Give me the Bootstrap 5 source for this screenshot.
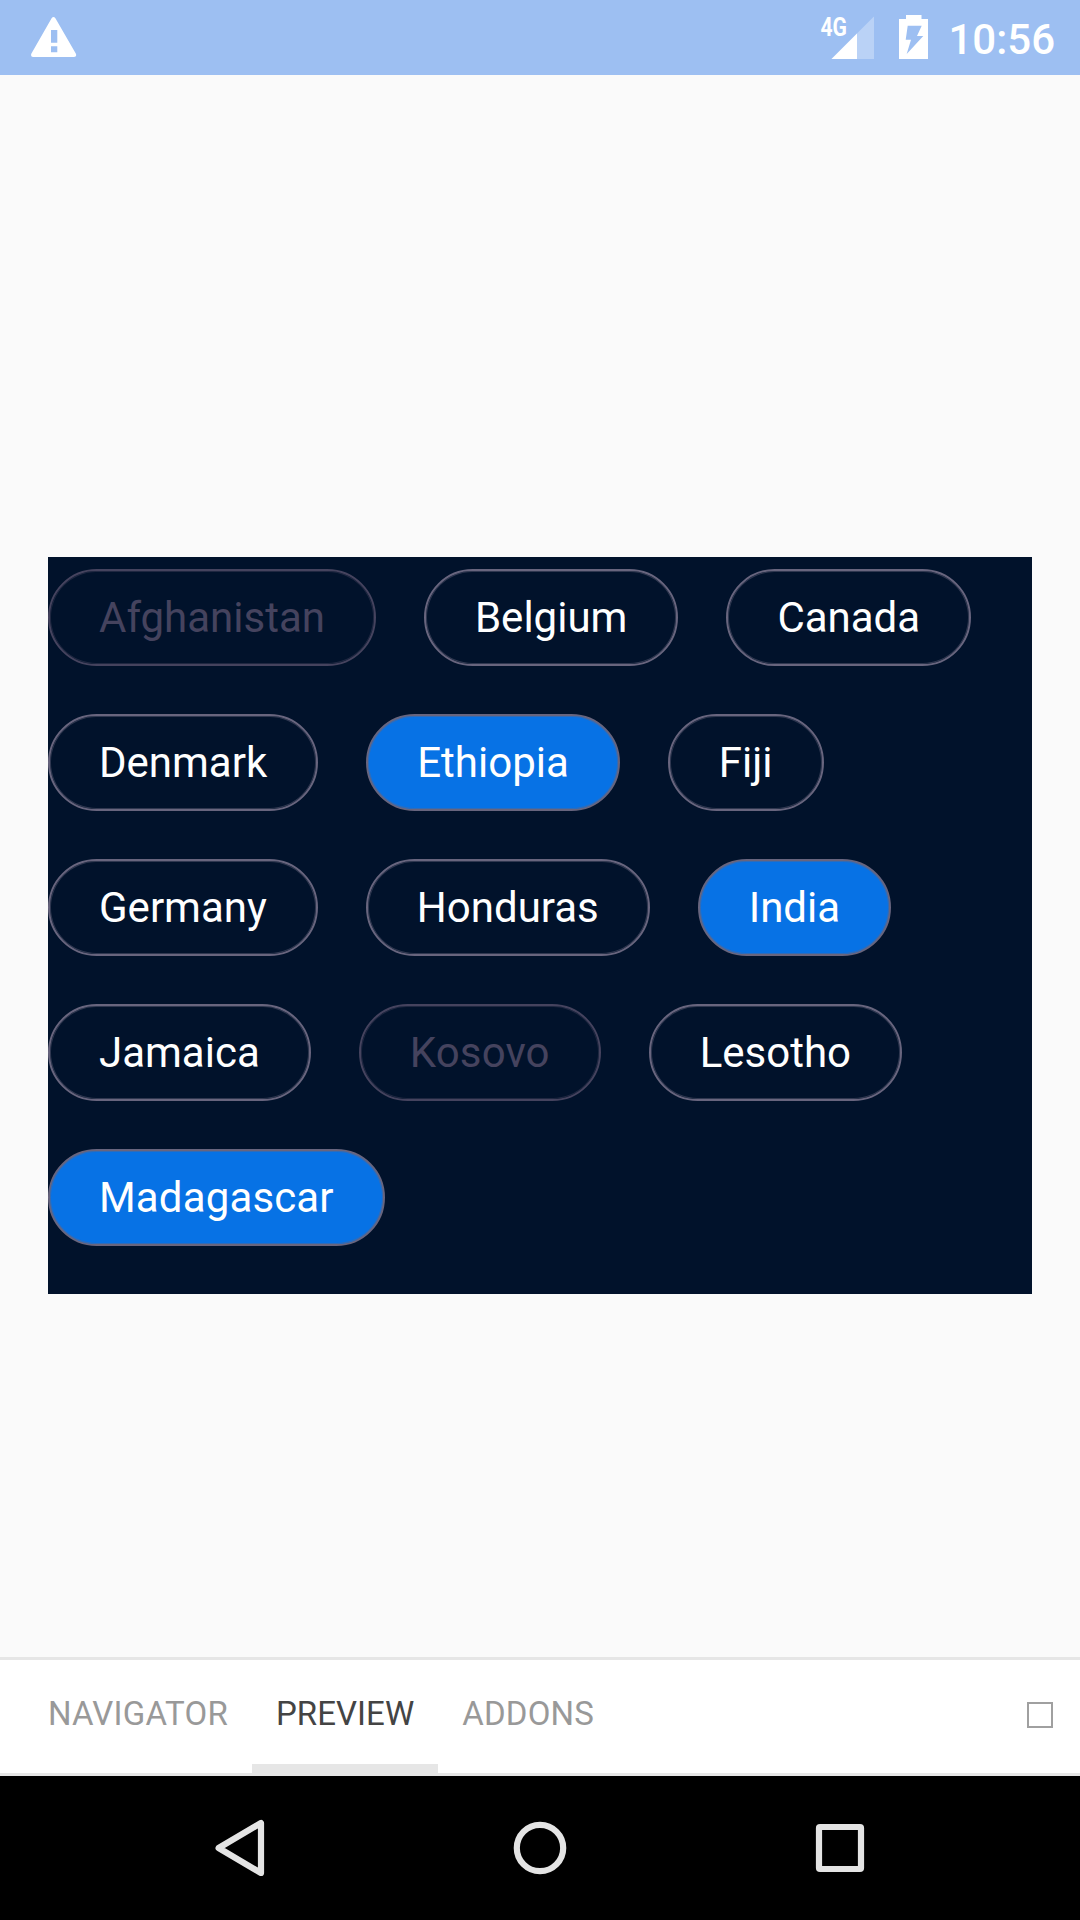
<!DOCTYPE html>
<html lang="en">
<head>
<meta charset="utf-8">
<meta name="viewport" content="width=device-width, initial-scale=1">
<title>Countries</title>
<link href="https://cdn.jsdelivr.net/npm/bootstrap@5.3.0/dist/css/bootstrap.min.css" rel="stylesheet">
<style>
body{font-family:Roboto,"Noto Sans",sans-serif;background:#fafafa;height:1920px;overflow:hidden}
svg{display:block;flex:none}
.statusbar{height:75px;background:#9dbff2;padding:0 25px 0 31px}
.clock{font-size:42px;font-weight:500;line-height:75px;color:#fff;padding-top:2px}
.stage{padding:0 48px 363px}
.chips{background:#01122b;padding:12px 0 48px;row-gap:48px;column-gap:48px}
.chip{height:97px;border:2px solid #68657e;box-shadow:inset 0 0 0 1px rgba(104,101,126,.45);border-radius:49px;padding:0 49px;font-size:42px;line-height:93px;color:#fff;background:transparent;white-space:nowrap}
.chip.on{background:#0772e5}
.chip:disabled{border-color:#45435e;color:#45435e;box-shadow:inset 0 0 0 1px rgba(69,67,94,.45)}
.chip.loose{letter-spacing:.15px}
.tabbar{height:119px;background:#fff;border-top:3px solid #e6e6e6;border-bottom:3px solid #e6e6e6;padding:0 27px 0 24px}
.tab{font-size:33px;letter-spacing:.2px;line-height:107px;padding:0 24px;height:116px;color:#999;border:0;border-bottom:12px solid transparent;background:none;margin-bottom:-3px}
.tab.on{color:#444;border-bottom-color:#e6e6e6;letter-spacing:.05px}
.box{width:26px;height:26px;border:2px solid #a0a0a0;margin-bottom:3px}
.sysnav{height:144px;background:#000}
</style>
</head>
<body class="d-flex flex-column">
<header class="statusbar d-flex justify-content-between">
  <svg width="46" height="75" viewBox="31 0 46 75"><path fill="#fff" fill-rule="evenodd" d="M51.6 18.2Q53.5 15.8 55.4 18.2L75.9 53.8Q77 57 74 57H33Q30.400 57 31.300 53.800ZM51 30V42.700H57.300V30ZM51 46.300V52.300H57.300V46.300Z"/></svg>
  <div class="d-flex">
    <svg width="128" height="75" viewBox="820 0 128 75" fill="#fff">
      <text x="820.500" y="35.500" font-family="Roboto" font-weight="700" font-size="25.500" textLength="26.500" lengthAdjust="spacingAndGlyphs">4G</text>
      <path d="M874 16.500V59H831.500Z" opacity=".3"/><path d="M857 33.500V59H831.500Z"/>
      <path fill-rule="evenodd" d="M906 15H921.500V19H928V59H899V19H906ZM907.700 25.700L905.700 39.700H911L906.700 54L923.300 36H917L921.700 25.700Z"/>
    </svg>
    <span class="clock">10:56</span>
  </div>
</header>
<main class="stage flex-grow-1 d-flex flex-column justify-content-end">
  <div class="chips d-flex flex-wrap align-content-start">
    <button class="chip" disabled>Afghanistan</button>
    <button class="chip">Belgium</button>
    <button class="chip">Canada</button>
    <button class="chip">Denmark</button>
    <button class="chip on">Ethiopia</button>
    <button class="chip">Fiji</button>
    <button class="chip">Germany</button>
    <button class="chip">Honduras</button>
    <button class="chip on">India</button>
    <button class="chip">Jamaica</button>
    <button class="chip loose" disabled>Kosovo</button>
    <button class="chip">Lesotho</button>
    <button class="chip on loose">Madagascar</button>
  </div>
</main>
<nav class="tabbar d-flex justify-content-between align-items-center">
  <div class="d-flex align-self-start">
    <button class="tab">NAVIGATOR</button>
    <button class="tab on">PREVIEW</button>
    <button class="tab">ADDONS</button>
  </div>
  <span class="box"></span>
</nav>
<footer class="sysnav">
  <svg width="1080" height="144" viewBox="0 1776 1080 144" fill="none" stroke="#e4e4e4" stroke-width="6.200" stroke-linejoin="round">
    <path d="M261 1823V1873L218.600 1848Z"/>
    <circle cx="540" cy="1848" r="23.200"/>
    <rect x="819" y="1827" width="42" height="42" rx="1"/>
  </svg>
</footer>
<script src="https://cdn.jsdelivr.net/npm/bootstrap@5.3.0/dist/js/bootstrap.bundle.min.js"></script>
</body>
</html>
